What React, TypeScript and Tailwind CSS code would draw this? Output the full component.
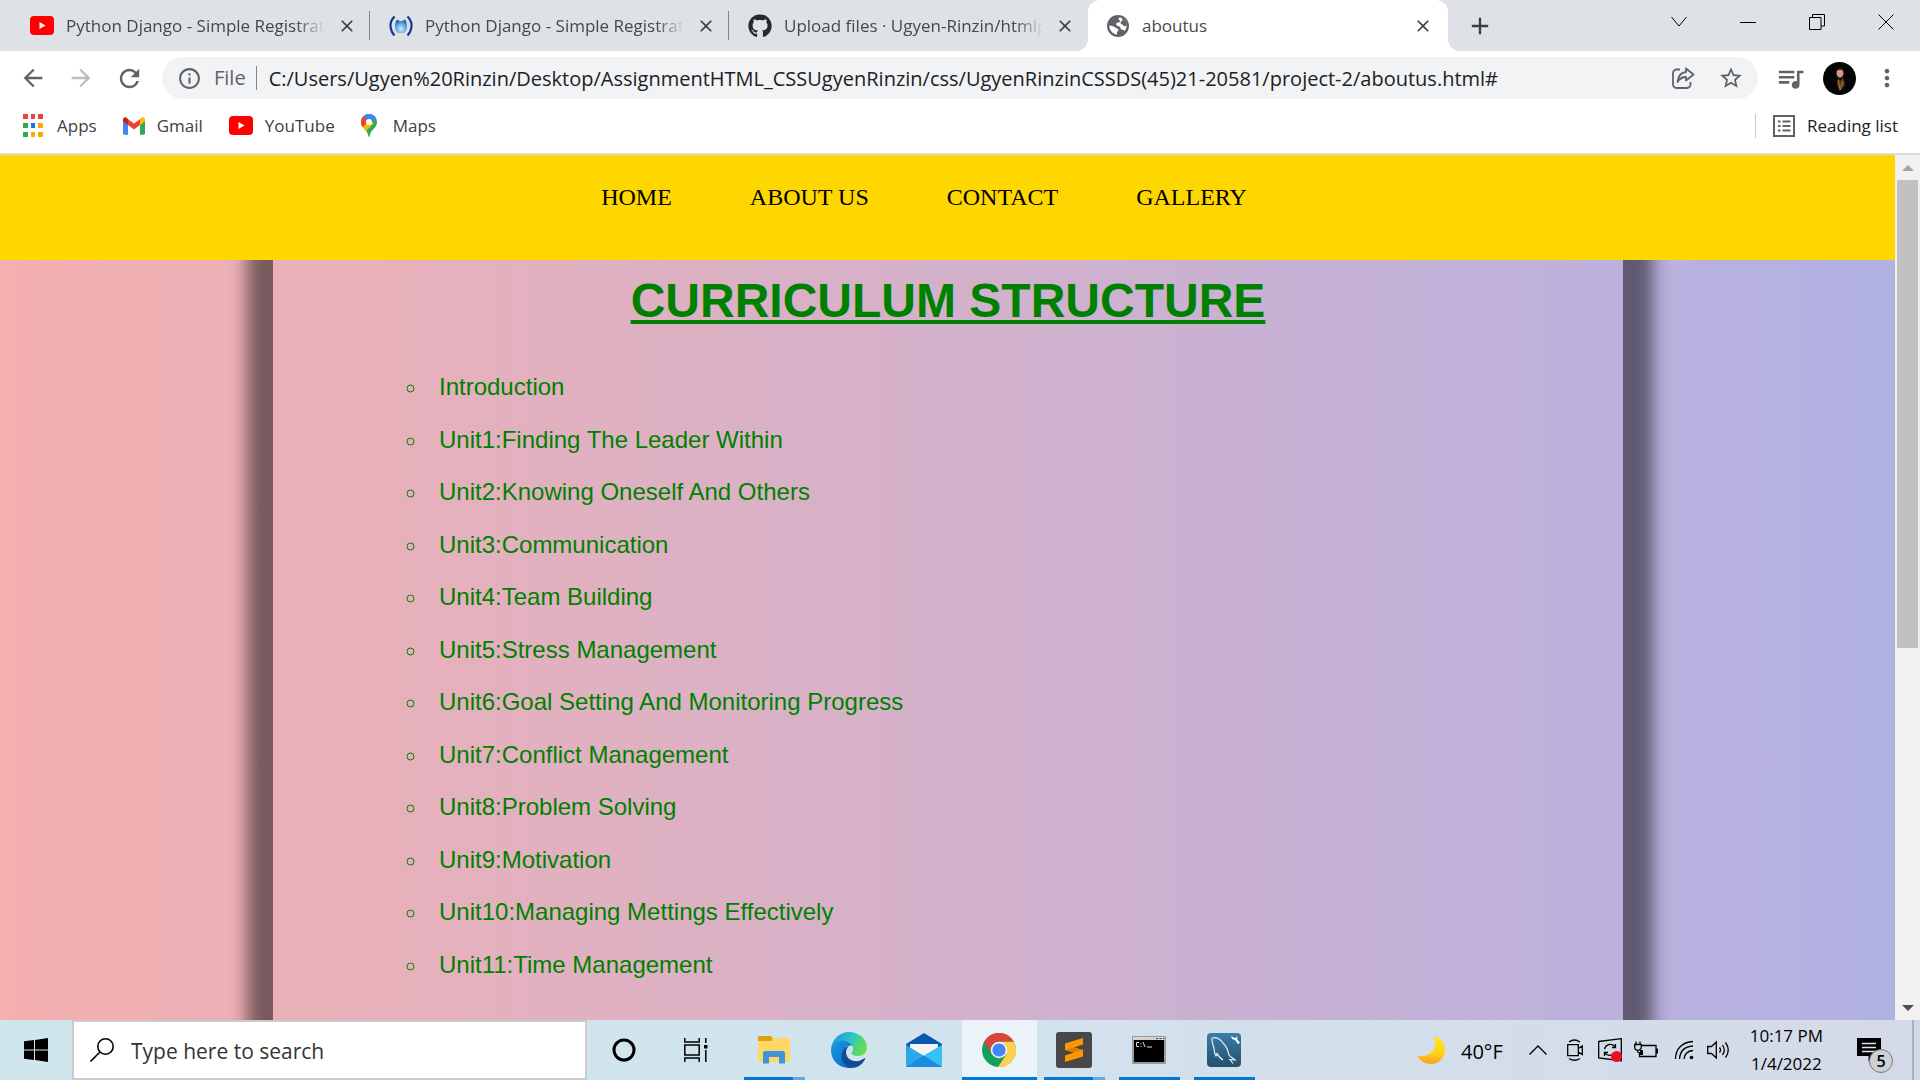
import React from "react";
import {
  MdAdd,
  MdArrowBack,
  MdArrowForward,
  MdClose,
  MdInfoOutline,
  MdMoreVert,
  MdQueueMusic,
  MdRefresh,
  MdStarBorder,
} from "react-icons/md";
import { FaGithub } from "react-icons/fa";

function YouTubeIcon() {
  return (
    <svg viewBox="0 0 24 19" className="h-[19px] w-6 shrink-0">
      <rect width="24" height="19" rx="4" fill="#f00" />
      <path d="M9.500 6v7l6-3.500z" fill="#fff" />
    </svg>
  );
}

function BracketIcon() {
  return (
    <svg viewBox="0 0 24 24" className="size-6 shrink-0">
      <defs>
        <radialGradient id="orb" cx="50%" cy="70%" r="70%">
          <stop offset="0" stopColor="#cdeaff" />
          <stop offset="0.5" stopColor="#6fb2ea" />
          <stop offset="1" stopColor="#1b4fae" />
        </radialGradient>
      </defs>
      <path d="M5.500 2.500Q1 7 1.500 12.500Q2 18 5.500 21.500M18.500 2.500Q23 7 22.500 12.500Q22 18 18.500 21.500" fill="none" stroke="#12389a" strokeWidth="2.200" />
      <path d="M8 5.500Q12 9 16 5.500Q18 8 18 12Q18 17 15 19H9Q6 17 6 12Q6 8 8 5.500z" fill="url(#orb)" />
    </svg>
  );
}

function GlobeIcon() {
  return (
    <svg viewBox="0 0 22 22" className="size-[22px] shrink-0">
      <circle cx="11" cy="11" r="11" fill="#5f6368" />
      <path d="M12.500 2.500C17 3 19.700 6.500 19.700 10.500c0 2-1 4-2.200 5.500-.8-.5-1.200-1.500-2.800-1.500-1.200 0-1-1.500-1.700-2.500-.8-1-2.700-.7-3.500-1.700C8.700 9 9.500 7.500 11 7.500c1.200 0 2-.5 2-1.500 0-.8-1.500-1-1.500-2 0-.7.500-1.200 1-1.500z" fill="#fff" />
      <path d="M2.300 10.500c2.500.3 5.200.7 6.700 2.500.8 1 2.500.5 2.500 2 0 1.200-1.500 1.200-1.500 2.500v2C5.500 19 2.300 15.300 2.300 10.500z" fill="#fff" />
      <path d="M14.500 2.800c3 1.200 5.200 4.200 5.200 7.700-1.500 1.500-3 .5-3.700-.5s-2.500-.5-2.500-2 2-2 2-3.200c0-.8-.5-1.300-1-2z" fill="#5f6368" />
    </svg>
  );
}

function GmailIcon() {
  return (
    <svg viewBox="0 0 24 19" className="h-[18px] w-[22px] shrink-0">
      <path d="M0 3v14.500A1.500 1.500 0 0 0 1.500 19H5.500V8z" fill="#4285f4" />
      <path d="M24 3v14.500a1.500 1.500 0 0 1-1.500 1.500H18.500V8z" fill="#34a853" />
      <path d="M18.500 2v6.500L24 4.300V2.500C24 .3 21.500-.8 19.800.6z" fill="#fbbc04" />
      <path d="M5.500 8.500V2L12 6.800 18.500 2v6.500L12 13.300z" fill="#ea4335" />
      <path d="M0 2.500v1.800l5.500 4.200V2L4.200.6C2.500-.8 0 .3 0 2.500z" fill="#c5221f" />
    </svg>
  );
}

function MapsIcon() {
  return (
    <svg viewBox="0 0 16 23" className="h-[23px] w-4 shrink-0">
      <defs>
        <clipPath id="pin">
          <path d="M8 0a8 8 0 0 1 8 8c0 4-2.600 5.800-4.600 8.300C9.600 18.500 9 20 8.700 22c-.1.700-.4 1-.7 1s-.6-.3-.7-1C7 20 6.400 18.500 4.600 16.300 2.600 13.800 0 12 0 8a8 8 0 0 1 8-8z" />
        </clipPath>
      </defs>
      <g clipPath="url(#pin)">
        <rect width="16" height="23" fill="#34a853" />
        <path d="M0 8L8 8 13 9 4 18 0 18z" fill="#fbbc04" />
        <path d="M0 0h16v3L8 11 2 6z" fill="#4285f4" />
        <path d="M0 2l2 0 6 5-6 6-2-1z" fill="#ea4335" />
      </g>
      <circle cx="8" cy="8" r="3" fill="#fff" />
    </svg>
  );
}

function AppsIcon() {
  const colors = [
    "bg-[#ea4335]", "bg-[#ea4335]", "bg-[#ea4335]",
    "bg-[#34a853]", "bg-[#1a73e8]", "bg-[#f9ab00]",
    "bg-[#34a853]", "bg-[#f9ab00]", "bg-[#f9ab00]",
  ];
  return (
    <span className="mr-0.5 grid w-5 shrink-0 grid-cols-3 gap-x-[3px] gap-y-1">
      {colors.map((c, i) => (
        <span key={i} className={`h-[5px] ${c}`} />
      ))}
    </span>
  );
}

function Tab({ icon, title, divider = true }: { icon: React.ReactNode; title: string; divider?: boolean }) {
  return (
    <div className="flex h-full min-w-0 flex-1 items-center">
      <button className="flex min-w-0 flex-1 items-center gap-3 pl-[19px] text-left">
        <span className="flex w-6 shrink-0 justify-center">{icon}</span>
        <span className="min-w-0 flex-1 whitespace-nowrap [mask-image:linear-gradient(to_right,#000_calc(100%-28px),transparent)]">
          {title}
        </span>
      </button>
      <button aria-label="Close tab" className="mx-[10px] flex size-6 shrink-0 items-center justify-center text-[#3c4043]">
        <MdClose size={20} />
      </button>
      <span className={`h-[29px] w-px shrink-0 ${divider ? "bg-[#80868b]" : ""}`} />
    </div>
  );
}

function TabStrip() {
  return (
    <div className="flex h-[51px] shrink-0 bg-white text-[17px] text-[#45494d]">
      <div className="flex w-[1088px] min-w-0 shrink rounded-br-xl bg-[#dee1e6] pl-[11px]">
        <Tab icon={<YouTubeIcon />} title="Python Django - Simple Registrat" />
        <Tab icon={<BracketIcon />} title="Python Django - Simple Registrat" />
        <Tab icon={<FaGithub size={24} className="text-[#24292f]" />} title="Upload files · Ugyen-Rinzin/htmlp" divider={false} />
      </div>
      <div className="w-[360px] min-w-0 shrink bg-[#dee1e6]">
        <div className="flex h-full items-center rounded-t-xl bg-white">
          <button className="flex min-w-0 flex-1 items-center gap-3 pl-[18px] text-left">
            <span className="flex w-6 shrink-0 justify-center">
              <GlobeIcon />
            </span>
            <span>aboutus</span>
          </button>
          <button aria-label="Close tab" className="mr-[13px] flex size-6 items-center justify-center text-[#3c4043]">
            <MdClose size={20} />
          </button>
        </div>
      </div>
      <div className="flex flex-1 items-center rounded-bl-xl bg-[#dee1e6]">
        <button aria-label="New tab" className="ml-[18px] text-[#3c4043]">
          <MdAdd size={28} />
        </button>
        <div className="ml-auto flex pb-[7px] text-black">
          <button aria-label="Search tabs" className="flex w-[69px] justify-center">
            <svg viewBox="0 0 16 16" className="size-4" fill="none" stroke="currentColor"><path d="M.5 3l7.500 9 7.500-9" /></svg>
          </button>
          <button aria-label="Minimize" className="flex w-[69px] justify-center">
            <svg viewBox="0 0 16 16" className="size-4" fill="none" stroke="currentColor"><path d="M0 8.500h16" /></svg>
          </button>
          <button aria-label="Restore" className="flex w-[69px] justify-center">
            <svg viewBox="0 0 16 16" className="size-4" fill="none" stroke="currentColor"><path d="M.5 3.500h11.500v12H.5zM3.500 3.500v-3h12v11.500h-3.500" /></svg>
          </button>
          <button aria-label="Close" className="flex w-[69px] justify-center">
            <svg viewBox="0 0 16 16" className="size-4" fill="none" stroke="currentColor"><path d="M.5.5l15 15M15.500.5l-15 15" /></svg>
          </button>
        </div>
      </div>
    </div>
  );
}

function ShareIcon() {
  return (
    <svg viewBox="0 0 24 24" className="size-6" fill="none" stroke="currentColor" strokeWidth="1.800" strokeLinejoin="round">
      <path d="M9 3.500H5.500a3.500 3.500 0 0 0-3.500 3.500v11.500a3.500 3.500 0 0 0 3.500 3.500h10.500a3.500 3.500 0 0 0 3.500-3.500v-2.500" />
      <path d="M15 2.500L22.500 8.500l-7.500 6V11c-4 0-6.500 1.500-8.500 5 .5-5.500 3.500-9.500 8.500-10z" />
    </svg>
  );
}

function Toolbar() {
  return (
    <div className="flex h-[54px] shrink-0 items-center bg-white text-[#5f6368]">
      <button aria-label="Back" className="ml-[19px]"><MdArrowBack size={28} /></button>
      <button aria-label="Forward" className="ml-5 text-[#babcbe]"><MdArrowForward size={28} /></button>
      <button aria-label="Reload" className="ml-5"><MdRefresh size={29} /></button>
      <div className="ml-[18px] flex h-[42px] flex-1 items-center rounded-full bg-[#f1f3f4] pr-3.5 pl-[15px]">
        <MdInfoOutline size={25} className="shrink-0" />
        <span className="ml-3 text-[20px]">File</span>
        <span className="ml-[10px] h-6 w-px bg-[#80868b]" />
        <input
          aria-label="Address"
          className="ml-3 min-w-0 flex-1 pt-px text-[20px] text-[#202124] outline-none"
          defaultValue="C:/Users/Ugyen%20Rinzin/Desktop/AssignmentHTML_CSSUgyenRinzin/css/UgyenRinzinCSSDS(45)21-20581/project-2/aboutus.html#"
        />
        <button aria-label="Share"><ShareIcon /></button>
        <button aria-label="Bookmark" className="ml-[23px]"><MdStarBorder size={26} /></button>
      </div>
      <button aria-label="Media" className="ml-[17px]"><MdQueueMusic size={31} /></button>
      <button aria-label="Profile" className="ml-[17px]">
        <svg viewBox="0 0 33 33" className="size-[33px]">
          <circle cx="16.500" cy="16.500" r="16.500" fill="#060505" />
          <ellipse cx="17" cy="11" rx="3.500" ry="4.700" fill="#d29a84" />
          <path d="M13 9.500c-.5-6 8.500-6 8 0-2-2.500-5.500-2.500-8 0z" fill="#1b1210" />
          <path d="M15 15l2 4 3-4 2 8-5 6-3-6z" fill="#5c3a22" />
          <path d="M15.500 18l1.500 10 3-9" fill="none" stroke="#9a7d24" />
        </svg>
      </button>
      <button aria-label="Menu" className="mr-[19px] ml-[17px]"><MdMoreVert size={28} /></button>
    </div>
  );
}

function Bookmark({ icon, label }: { icon: React.ReactNode; label: string }) {
  return (
    <a href="#" className="flex items-center gap-3">
      {icon}
      {label}
    </a>
  );
}

function BookmarksBar() {
  return (
    <div className="flex h-[50px] shrink-0 items-center border-b-2 border-[#dadce0] bg-white pb-[7px] pl-[23px] text-[17px] text-[#3c4043]">
      <div className="flex gap-[26px]">
        <Bookmark icon={<AppsIcon />} label="Apps" />
        <Bookmark icon={<GmailIcon />} label="Gmail" />
        <Bookmark icon={<YouTubeIcon />} label="YouTube" />
        <Bookmark icon={<span className="mr-1"><MapsIcon /></span>} label="Maps" />
      </div>
      <button className="mr-[22px] ml-auto flex items-center text-[#202124]">
        <span className="h-6 w-px bg-[#c4c7cb]" />
        <svg viewBox="0 0 22 22" className="mr-3 ml-[17px] size-[22px]" fill="none" stroke="#5f6368" strokeWidth="2">
          <rect x="1" y="1" width="20" height="20" />
          <path d="M5 6.500h2.500M9.500 6.500h8M5 11h2.500M9.500 11h8M5 15.500h2.500M9.500 15.500h8" />
        </svg>
        Reading list
      </button>
    </div>
  );
}

const units = [
  "Introduction",
  "Unit1:Finding The Leader Within",
  "Unit2:Knowing Oneself And Others",
  "Unit3:Communication",
  "Unit4:Team Building",
  "Unit5:Stress Management",
  "Unit6:Goal Setting And Monitoring Progress",
  "Unit7:Conflict Management",
  "Unit8:Problem Solving",
  "Unit9:Motivation",
  "Unit10:Managing Mettings Effectively",
  "Unit11:Time Management",
];

function Page() {
  return (
    <div className="flex min-h-0 flex-1">
      <main className="flex min-w-0 flex-1 flex-col overflow-hidden bg-linear-to-r from-[#f4afaf] to-[#b1b1e4]">
        <nav className="z-10 flex h-[105px] shrink-0 justify-center gap-[78px] bg-[gold] pt-7 pr-[47px] font-['Liberation_Serif',serif] text-[24px] leading-7 text-black">
          <a href="#">HOME</a>
          <a href="#">ABOUT US</a>
          <a href="#">CONTACT</a>
          <a href="#">GALLERY</a>
        </nav>
        <section className="mr-[272px] ml-[273px] flex-1 font-['Liberation_Sans',sans-serif] text-[green] shadow-[2px_0_16px_28px_rgba(0,0,0,0.490)]">
          <h1 className="pt-[13px] text-center text-[48px] leading-[56px] font-bold underline">CURRICULUM STRUCTURE</h1>
          <ul className="mt-8 ml-[155px] grid h-[630px] list-[circle] auto-rows-fr items-center text-[24px] leading-7">
            {units.map((u) => (
              <li key={u} className="pl-[11px]">{u}</li>
            ))}
          </ul>
        </section>
      </main>
      <div className="flex w-[25px] shrink-0 flex-col items-center bg-[#f1f1f1]">
        <button aria-label="Scroll up" className="flex h-[25px] w-full items-center justify-center">
          <svg viewBox="0 0 12 6" className="h-1.5 w-3"><path d="M0 6l6-6 6 6z" fill="#a3a3a3" /></svg>
        </button>
        <div className="h-[468px] w-[21px] bg-[#c1c1c1]" />
        <button aria-label="Scroll down" className="mt-auto flex h-[25px] w-full items-center justify-center">
          <svg viewBox="0 0 12 6" className="h-1.5 w-3"><path d="M0 0l6 6 6-6z" fill="#505050" /></svg>
        </button>
      </div>
    </div>
  );
}

function TaskButton({ label, state, children }: { label: string; state?: "open" | "multi" | "active"; children: React.ReactNode }) {
  return (
    <button
      aria-label={label}
      className={`relative flex h-full w-[75px] items-center justify-center pr-0.5 ${state === "active" ? "bg-[#ecf3f8]" : ""}`}
    >
      {children}
      {state === "active" && <span className="absolute inset-x-0 bottom-0 h-[3px] bg-[#0078d7]" />}
      {state === "open" && <span className="absolute inset-x-[7px] bottom-0 h-[3px] bg-[#0078d7]" />}
      {state === "multi" && (
        <span className="absolute inset-x-[7px] bottom-0 h-[3px] border-r-[12px] border-[#63a9e2] bg-[#0078d7]" />
      )}
    </button>
  );
}

function TaskIcons() {
  return (
    <>
      <TaskButton label="Cortana">
        <svg viewBox="0 0 24 24" className="size-6"><circle cx="12" cy="12" r="10" fill="none" stroke="#000" strokeWidth="3" /></svg>
      </TaskButton>
      <TaskButton label="Task view">
        <svg viewBox="0 0 24 24" className="mr-1.5 size-6" fill="none" stroke="#000" strokeWidth="1.500">
          <path d="M.8 0v4h14.400V0M.8 7h14.400v10H.8zM.8 24v-4h14.400v4M21.800 0v5M21.800 12v12" />
          <path d="M20 7h3.500v3.500H20z" fill="#000" stroke="none" />
        </svg>
      </TaskButton>
      <TaskButton label="File Explorer" state="multi">
        <svg viewBox="0 0 32 28" className="h-7 w-8">
          <path d="M0 1.500A1.500 1.500 0 0 1 1.500 0H13l2 3-2 3H0z" fill="#e0a010" />
          <path d="M0 5h13l3-3h14.500A1.500 1.500 0 0 1 32 3.500v21A1.500 1.500 0 0 1 30.500 26h-29A1.500 1.500 0 0 1 0 24.500z" fill="#ffd766" />
          <path d="M5 27.500V17a2 2 0 0 1 2-2h18a2 2 0 0 1 2 2v10.500h-6V21H11v6.500z" fill="#3b96dd" />
        </svg>
      </TaskButton>
      <TaskButton label="Microsoft Edge">
        <svg viewBox="0 0 36 36" className="size-9">
          <defs>
            <linearGradient id="eg" x1="0" y1="0.200" x2="1" y2="0.500">
              <stop offset="0" stopColor="#1b8fd6" />
              <stop offset="0.500" stopColor="#2cc3d0" />
              <stop offset="1" stopColor="#6be04a" />
            </linearGradient>
            <linearGradient id="eb" x1="0" y1="0" x2="1" y2="1">
              <stop offset="0" stopColor="#1a9be6" />
              <stop offset="1" stopColor="#0a62c0" />
            </linearGradient>
          </defs>
          <path d="M0 17C1 7 9 0 18 0c10 0 18 7 18 15.500 0 5-4 8.500-9 8.500-4 0-6.500-1.500-6.500-3 0-1 1.500-1.500 1.500-4.500C22 12 17 9 12 9 6 9 1.500 12 0 17z" fill="url(#eg)" />
          <path d="M0 18c0-5.500 5-9.500 11-9.500 5 0 9 2.500 10.500 5.500C17 12 13 17 13 23c0 6 4 11 9 12.500C9 38 0 29 0 18z" fill="url(#eb)" />
          <path d="M18 14.500c-5 3-4 13 5 14.500 4 .5 7-.5 10-2.500 1-.5 1.500 0 1 1-3 5-7.500 8.500-14 8.500-6-1-9.500-6-9.500-11.500 0-5 3-9 7.500-10z" fill="#114a96" />
        </svg>
      </TaskButton>
      <TaskButton label="Mail">
        <svg viewBox="0 0 36 34" className="h-[34px] w-9">
          <path d="M0 11L18 0l18 11v4H0z" fill="#0a59b0" />
          <path d="M4 11h28v6L18 25 4 17z" fill="#f4f4f4" />
          <path d="M0 12l18 11L36 12v21a1 1 0 0 1-1 1H1a1 1 0 0 1-1-1z" fill="#29a8ea" />
          <path d="M36 12v22L18 22.500z" fill="#33c2f2" />
          <path d="M0 34L18 22.500 36 34z" fill="#1a8de0" />
        </svg>
      </TaskButton>
      <TaskButton label="Chrome" state="active">
        <svg viewBox="0 0 34 34" className="size-[34px]">
          <circle cx="17" cy="17" r="17" fill="#159f5c" />
          <path d="M17 8.500h14.700A17 17 0 0 1 16 34l8.400-12.700z" fill="#ffd04b" />
          <path d="M2.300 8.500A17 17 0 0 1 31.700 8.500H17a8.500 8.500 0 0 0-7.400 12.700z" fill="#dc4437" />
          <circle cx="17" cy="17" r="8.300" fill="#f1f1f1" />
          <circle cx="17" cy="17" r="6.600" fill="#4285f4" />
        </svg>
      </TaskButton>
      <TaskButton label="Sublime Text" state="multi">
        <svg viewBox="0 0 36 36" className="size-9">
          <rect width="36" height="36" rx="3" fill="#474747" />
          <path d="M9 11.500L27 6v6.500L18 15.500l9 2.500v6.500L9 30v-6.500l9-3-9-2.500z" fill="#ff9800" />
          <path d="M18 15.500L9 18l9 2.500 9-2.500z" fill="#e07c00" />
        </svg>
      </TaskButton>
      <TaskButton label="Command Prompt" state="open">
        <svg viewBox="0 0 34 28" className="h-7 w-[34px]">
          <rect width="34" height="28" rx="1" fill="#9a9a9a" />
          <rect x="1" y="1" width="32" height="3" fill="#d4d4d4" />
          <path d="M24 2.500h2M27.500 2.500h2M31 2.500h1.500" stroke="#444" />
          <rect x="2" y="4" width="30" height="22" fill="#000" />
          <path d="M7 6.500H4.500v4H7M9 7.500v1M9 10v1M11 6l2 5M15 11h5" fill="none" stroke="#ddd" />
        </svg>
      </TaskButton>
      <TaskButton label="MySQL Workbench" state="open">
        <svg viewBox="0 0 36 36" className="size-9">
          <defs>
            <linearGradient id="my" x1="0" y1="0" x2="0" y2="1">
              <stop offset="0" stopColor="#3b7da8" />
              <stop offset="1" stopColor="#234f6e" />
            </linearGradient>
          </defs>
          <rect x="1" y="1" width="34" height="34" rx="4" fill="url(#my)" />
          <path d="M6 6c4-1 8 1 11 5 3 3 5 7 6 12 1 2 4 3 6 5l-5-.5 3 4M6 6c-.5 4 1 7 2 10 .5 3 0 5 2 8 1-1 1-3 1-3 1 3 3 5 6 7" fill="none" stroke="#e6eef3" strokeWidth="1.200" />
          <path d="M25 4l1 3 3 1 3 4 2-1-3-4 .5-3-2 2-2-.5z" fill="#fff" />
        </svg>
      </TaskButton>
    </>
  );
}

function Tray() {
  return (
    <div className="ml-auto flex h-full items-center text-black">
      <button className="flex items-center gap-4 text-[20px]">
        <svg viewBox="0 0 28 28" className="size-7">
          <defs>
            <linearGradient id="moon" x1="0.600" y1="0" x2="0.500" y2="1">
              <stop offset="0" stopColor="#ffe813" />
              <stop offset="0.600" stopColor="#ffd21a" />
              <stop offset="1" stopColor="#f9a11b" />
            </linearGradient>
          </defs>
          <path d="M17 0c7 2 11 8 11 14 0 8-6 14-14 14C8 28 3 25 0 19.500c9 2.500 22-3 17-19.500z" fill="url(#moon)" />
        </svg>
        <span className="pt-1">40°F</span>
      </button>
      <button aria-label="Show hidden icons" className="ml-[26px]">
        <svg viewBox="0 0 18 10" className="h-2.5 w-[18px]" fill="none" stroke="#000" strokeWidth="1.400"><path d="M.5 9.500L9 1l8.500 8.500" /></svg>
      </button>
      <button aria-label="Meet now" className="ml-5">
        <svg viewBox="0 0 16 22" className="h-[22px] w-4" fill="none" stroke="#000" strokeWidth="1.300">
          <path d="M.7 5.700h10.600v11H.7zM11.300 9.500L15.300 7v8.500l-4-2.500M2 3Q7.500-1 13 3M2 19.500Q7.500 23 13 19.500" />
        </svg>
      </button>
      <button aria-label="Updates" className="ml-[15px]">
        <svg viewBox="0 0 24 24" className="size-6" fill="none" stroke="#000" strokeWidth="1.300">
          <path d="M.7 3.500L23.300.7v22L.7 20z" />
          <path d="M6.500 11a6 6 0 0 1 10-3l1 1.500M17.500 6v3.500H14M6.500 18v-3.500H10M6.500 14.500q3 4.500 8 2" />
          <circle cx="18.500" cy="18.500" r="5.500" fill="#e81123" stroke="none" />
        </svg>
      </button>
      <button aria-label="Battery" className="ml-3">
        <svg viewBox="0 0 24 18" className="h-[18px] w-6" fill="none" stroke="#000" strokeWidth="1.300">
          <path d="M8 4.500h14v11H5.500V11M23.300 7.500v5M2 .5v3M6 .5v3M.7 3.500h6.600v2.500a3.300 3.300 0 0 1-6.600 0zM4 9v3" />
          <path d="M6 9h3v5H6z" fill="#000" stroke="none" />
        </svg>
      </button>
      <button aria-label="Network" className="ml-4">
        <svg viewBox="0 0 20 20" className="size-5" fill="none" stroke="#000" strokeWidth="1.300">
          <path d="M1.500 19C1.500 9 8 2 19 1.500M5.500 19C6 11.500 10.500 6.500 19 6M10 19c.5-4.500 3.500-8 9-8.500" />
          <circle cx="17.500" cy="17.500" r="1.800" fill="#000" stroke="none" />
        </svg>
      </button>
      <button aria-label="Volume" className="ml-[13px]">
        <svg viewBox="0 0 23 20" className="h-5 w-[23px]" fill="none" stroke="#000" strokeWidth="1.300">
          <path d="M.7 6.500h3.800L9.300 2v16l-4.800-4.500H.7zM12.500 7.500q2 2.500 0 5M15.500 5q3.500 5 0 10M18.500 2.500q5.500 7.500 0 15" />
        </svg>
      </button>
      <button className="ml-5 text-center text-[17px] leading-[28px]">
        10:17 PM
        <br />
        1/4/2022
      </button>
      <button aria-label="Notifications" className="relative mr-[31px] ml-[34px] size-6">
        <svg viewBox="0 0 24 24" className="size-6">
          <path d="M0 0h24v18H17l-5.500 5.500V18H0z" fill="#000" />
          <path d="M5 5.500h14M5 9.500h14M5 13.500h14" stroke="#dfe5ee" strokeWidth="1.300" />
        </svg>
        <span className="absolute top-[11px] left-3 flex size-6 items-center justify-center rounded-full border border-[#777] bg-[#cdd1d6] text-[16px] font-semibold">
          5
        </span>
      </button>
      <span className="h-full w-2 border-l-2 border-[#a9b0be]" />
    </div>
  );
}

function Taskbar() {
  return (
    <footer className="flex h-[60px] shrink-0 bg-linear-to-r from-[#cfe6ec] via-[#d2e3ee] to-[#d4d9e7]">
      <button aria-label="Start" className="flex w-[72px] items-center justify-center">
        <svg viewBox="0 0 24 24" className="size-6"><path d="M0 3.200L10 2v9.500H0zM11 1.900L24 0v11.500H11zM0 12.500h10V22L0 20.800zM11 12.500h13V24l-13-1.900z" fill="#000" /></svg>
      </button>
      <label className="flex w-[515px] items-center border-2 border-[#ccc] bg-white">
        <svg viewBox="0 0 24 24" className="ml-4 size-6" fill="none" stroke="#000" strokeWidth="1.600">
          <circle cx="15.500" cy="8.500" r="7.700" />
          <path d="M10 14L.5 23.500" />
        </svg>
        <input aria-label="Search" className="ml-[17px] min-w-0 flex-1 pt-1 text-[21px] outline-none placeholder:text-[#333]" placeholder="Type here to search" />
      </label>
      <TaskIcons />
      <Tray />
    </footer>
  );
}

export default function App() {
  return (
    <div className="flex h-screen flex-col overflow-hidden font-['Open_Sans',sans-serif]">
      <TabStrip />
      <Toolbar />
      <BookmarksBar />
      <Page />
      <Taskbar />
    </div>
  );
}
